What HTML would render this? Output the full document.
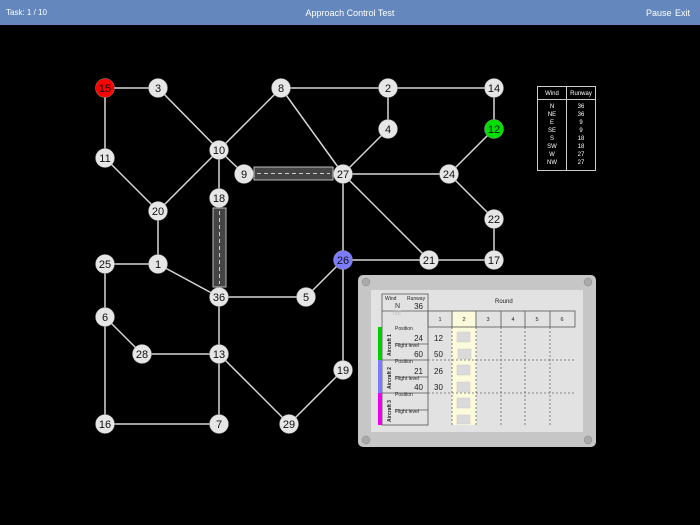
<!DOCTYPE html>
<html><head><meta charset="utf-8"><style>
html,body{margin:0;padding:0;width:700px;height:525px;background:#000;overflow:hidden;font-family:"Liberation Sans",sans-serif}
#top{position:absolute;left:0;top:0;width:700px;height:25px;background:#6487bd;color:#fff;font-size:9px}
#top span{position:absolute;top:8px}
</style></head><body>
<div id="top"><span style="left:6px;font-size:8px">Task: 1 / 10</span><span style="left:0;width:700px;text-align:center;font-size:9px">Approach Control Test</span><span style="left:646px">Pause</span><span style="left:675px">Exit</span></div>
<svg width="700" height="525" style="position:absolute;left:0;top:0" font-family="Liberation Sans, sans-serif">
<g stroke="#d8d8d8" stroke-width="1.5">
<line x1="105" y1="88" x2="158" y2="88"/><line x1="158" y1="88" x2="219" y2="150"/>
<line x1="281" y1="88" x2="219" y2="150"/><line x1="281" y1="88" x2="388" y2="88"/>
<line x1="388" y1="88" x2="494" y2="88"/><line x1="388" y1="88" x2="388" y2="129"/>
<line x1="388" y1="129" x2="343" y2="174"/><line x1="281" y1="88" x2="343" y2="174"/>
<line x1="494" y1="88" x2="494" y2="129"/><line x1="494" y1="129" x2="449" y2="174"/>
<line x1="449" y1="174" x2="494" y2="219"/><line x1="494" y1="219" x2="494" y2="260"/>
<line x1="343" y1="174" x2="449" y2="174"/><line x1="343" y1="174" x2="429" y2="260"/>
<line x1="343" y1="174" x2="343" y2="260"/><line x1="343" y1="260" x2="494" y2="260"/>
<line x1="219" y1="150" x2="244" y2="174"/><line x1="219" y1="150" x2="219" y2="198"/>
<line x1="219" y1="150" x2="158" y2="211"/><line x1="105" y1="88" x2="105" y2="158"/>
<line x1="105" y1="158" x2="158" y2="211"/><line x1="158" y1="211" x2="158" y2="264"/>
<line x1="105" y1="264" x2="158" y2="264"/><line x1="158" y1="264" x2="219" y2="297"/>
<line x1="105" y1="264" x2="105" y2="424"/><line x1="105" y1="317" x2="142" y2="354"/>
<line x1="142" y1="354" x2="219" y2="354"/><line x1="105" y1="424" x2="219" y2="424"/>
<line x1="219" y1="297" x2="219" y2="424"/><line x1="219" y1="297" x2="306" y2="297"/>
<line x1="306" y1="297" x2="343" y2="260"/><line x1="343" y1="260" x2="343" y2="370"/>
<line x1="219" y1="354" x2="289" y2="424"/><line x1="289" y1="424" x2="343" y2="370"/>
</g>
<rect x="254" y="167" width="79" height="13" fill="#444" stroke="#bbb" stroke-width="1"/>
<line x1="257" y1="173.5" x2="330" y2="173.5" stroke="#ccc" stroke-dasharray="4,3"/>
<rect x="213" y="208" width="13" height="79" fill="#444" stroke="#bbb" stroke-width="1"/>
<line x1="219.5" y1="211" x2="219.5" y2="284" stroke="#ccc" stroke-dasharray="4,3"/>
<g font-size="11" text-anchor="middle" fill="#111">
<g stroke="#999" stroke-width="0.5">
<circle cx="105" cy="88" r="9.5" fill="#f00"/><circle cx="158" cy="88" r="9.5" fill="#e6e6e6"/>
<circle cx="281" cy="88" r="9.5" fill="#e6e6e6"/><circle cx="388" cy="88" r="9.5" fill="#e6e6e6"/>
<circle cx="494" cy="88" r="9.5" fill="#e6e6e6"/><circle cx="494" cy="129" r="9.5" fill="#00dd00"/>
<circle cx="388" cy="129" r="9.5" fill="#e6e6e6"/><circle cx="219" cy="150" r="9.5" fill="#e6e6e6"/>
<circle cx="105" cy="158" r="9.5" fill="#e6e6e6"/><circle cx="244" cy="174" r="9.5" fill="#e6e6e6"/>
<circle cx="343" cy="174" r="9.5" fill="#e6e6e6"/><circle cx="449" cy="174" r="9.5" fill="#e6e6e6"/>
<circle cx="219" cy="198" r="9.5" fill="#e6e6e6"/><circle cx="158" cy="211" r="9.5" fill="#e6e6e6"/>
<circle cx="494" cy="219" r="9.5" fill="#e6e6e6"/><circle cx="343" cy="260" r="9.5" fill="#7b7bff"/>
<circle cx="429" cy="260" r="9.5" fill="#e6e6e6"/><circle cx="494" cy="260" r="9.5" fill="#e6e6e6"/>
<circle cx="105" cy="264" r="9.5" fill="#e6e6e6"/><circle cx="158" cy="264" r="9.5" fill="#e6e6e6"/>
<circle cx="219" cy="297" r="9.5" fill="#e6e6e6"/><circle cx="306" cy="297" r="9.5" fill="#e6e6e6"/>
<circle cx="105" cy="317" r="9.5" fill="#e6e6e6"/><circle cx="142" cy="354" r="9.5" fill="#e6e6e6"/>
<circle cx="219" cy="354" r="9.5" fill="#e6e6e6"/><circle cx="343" cy="370" r="9.5" fill="#e6e6e6"/>
<circle cx="105" cy="424" r="9.5" fill="#e6e6e6"/><circle cx="219" cy="424" r="9.5" fill="#e6e6e6"/>
<circle cx="289" cy="424" r="9.5" fill="#e6e6e6"/>
</g>
<text x="105" y="92">15</text><text x="158" y="92">3</text><text x="281" y="92">8</text><text x="388" y="92">2</text><text x="494" y="92">14</text><text x="494" y="133">12</text><text x="388" y="133">4</text><text x="219" y="154">10</text><text x="105" y="162">11</text><text x="244" y="178">9</text><text x="343" y="178">27</text><text x="449" y="178">24</text><text x="219" y="202">18</text><text x="158" y="215">20</text><text x="494" y="223">22</text><text x="343" y="264">26</text><text x="429" y="264">21</text><text x="494" y="264">17</text><text x="105" y="268">25</text><text x="158" y="268">1</text><text x="219" y="301">36</text><text x="306" y="301">5</text><text x="105" y="321">6</text><text x="142" y="358">28</text><text x="219" y="358">13</text><text x="343" y="374">19</text><text x="105" y="428">16</text><text x="219" y="428">7</text><text x="289" y="428">29</text>
</g>
<!-- wind table -->
<g fill="#fff" font-size="6" text-anchor="middle">
<rect x="537.5" y="86.5" width="58" height="84" fill="none" stroke="#ccc"/>
<line x1="537" y1="99.5" x2="596" y2="99.5" stroke="#ccc"/><line x1="566.5" y1="86" x2="566.5" y2="171" stroke="#ccc"/>
<text x="552" y="95">Wind</text><text x="581" y="95">Runway</text>
<text x="552" y="108">N</text><text x="581" y="108">36</text>
<text x="552" y="116">NE</text><text x="581" y="116">36</text>
<text x="552" y="124">E</text><text x="581" y="124">9</text>
<text x="552" y="132">SE</text><text x="581" y="132">9</text>
<text x="552" y="140">S</text><text x="581" y="140">18</text>
<text x="552" y="148">SW</text><text x="581" y="148">18</text>
<text x="552" y="156">W</text><text x="581" y="156">27</text>
<text x="552" y="164">NW</text><text x="581" y="164">27</text>
</g>
<!-- panel -->
<rect x="358" y="275" width="238" height="172" rx="5" fill="#c6c6c6"/>
<rect x="371" y="290" width="212" height="142" fill="#e2e2e2"/>
<g fill="#aaa" stroke="#888" stroke-width="0.5"><circle cx="366" cy="282" r="4"/><circle cx="588" cy="282" r="4"/><circle cx="366" cy="440" r="4"/><circle cx="588" cy="440" r="4"/></g>
<rect x="452" y="311" width="24" height="114" fill="#fbfbdc"/>
<g stroke="#555" stroke-width="0.8" fill="none">
<rect x="382" y="294" width="46" height="131"/>
<line x1="382" y1="311" x2="428" y2="311"/>
<rect x="428" y="311" width="147" height="16"/>
<line x1="452" y1="311" x2="452" y2="327"/><line x1="476" y1="311" x2="476" y2="327"/><line x1="501" y1="311" x2="501" y2="327"/><line x1="525" y1="311" x2="525" y2="327"/><line x1="550" y1="311" x2="550" y2="327"/>
<line x1="382" y1="360" x2="428" y2="360"/><line x1="382" y1="393" x2="428" y2="393"/>
<line x1="395" y1="344" x2="428" y2="344"/><line x1="395" y1="377" x2="428" y2="377"/><line x1="395" y1="410" x2="428" y2="410"/>
<g stroke-dasharray="2,2" stroke="#666"><line x1="428" y1="360" x2="575" y2="360"/><line x1="428" y1="393" x2="575" y2="393"/>
<line x1="452" y1="327" x2="452" y2="425"/><line x1="476" y1="327" x2="476" y2="425"/><line x1="501" y1="327" x2="501" y2="425"/><line x1="525" y1="327" x2="525" y2="425"/><line x1="550" y1="327" x2="550" y2="425"/></g>
</g>
<rect x="378" y="327" width="4" height="33" fill="#00cc00"/><rect x="378" y="360" width="4" height="33" fill="#7b7bff"/><rect x="378" y="393" width="4" height="32" fill="#ee00ee"/>
<g fill="#dadada" stroke="#ccc" stroke-width="0.5"><rect x="457" y="332" width="13" height="10"/><rect x="458" y="349" width="13" height="10"/><rect x="457" y="365" width="13" height="10"/><rect x="457" y="382" width="13" height="10"/><rect x="457" y="398" width="13" height="10"/><rect x="457" y="415" width="13" height="9"/></g>
<g fill="#222" font-size="5">
<text x="385" y="300">Wind</text><text x="407" y="300">Runway</text>
<text x="395" y="330">Position</text><text x="395" y="347">Flight level</text>
<text x="395" y="363">Position</text><text x="395" y="380">Flight level</text>
<text x="395" y="396">Position</text><text x="395" y="413">Flight level</text>
<text x="495" y="303" font-size="6">Round</text>
</g>
<g fill="#222" font-size="5.5" text-anchor="middle"><text x="440" y="321">1</text><text x="464" y="321">2</text><text x="488" y="321">3</text><text x="513" y="321">4</text><text x="537" y="321">5</text><text x="562" y="321">6</text></g>
<g fill="#222" font-size="5" font-weight="bold"><text transform="translate(391,356) rotate(-90)">Aircraft 1</text><text transform="translate(391,389) rotate(-90)">Aircraft 2</text><text transform="translate(391,422) rotate(-90)">Aircraft 3</text></g>
<g fill="#222" font-size="8" text-anchor="end"><text x="423" y="309">36</text><text x="423" y="341">24</text><text x="423" y="357">60</text><text x="423" y="374">21</text><text x="423" y="390">40</text></g>
<text x="395" y="308" font-size="7" fill="#333">N</text><text x="393" y="315" font-size="6" fill="#bbb">NE</text>
<g fill="#222" font-size="8"><text x="434" y="341">12</text><text x="434" y="357">50</text><text x="434" y="374">26</text><text x="434" y="390">30</text></g>
</svg>
</body></html>
